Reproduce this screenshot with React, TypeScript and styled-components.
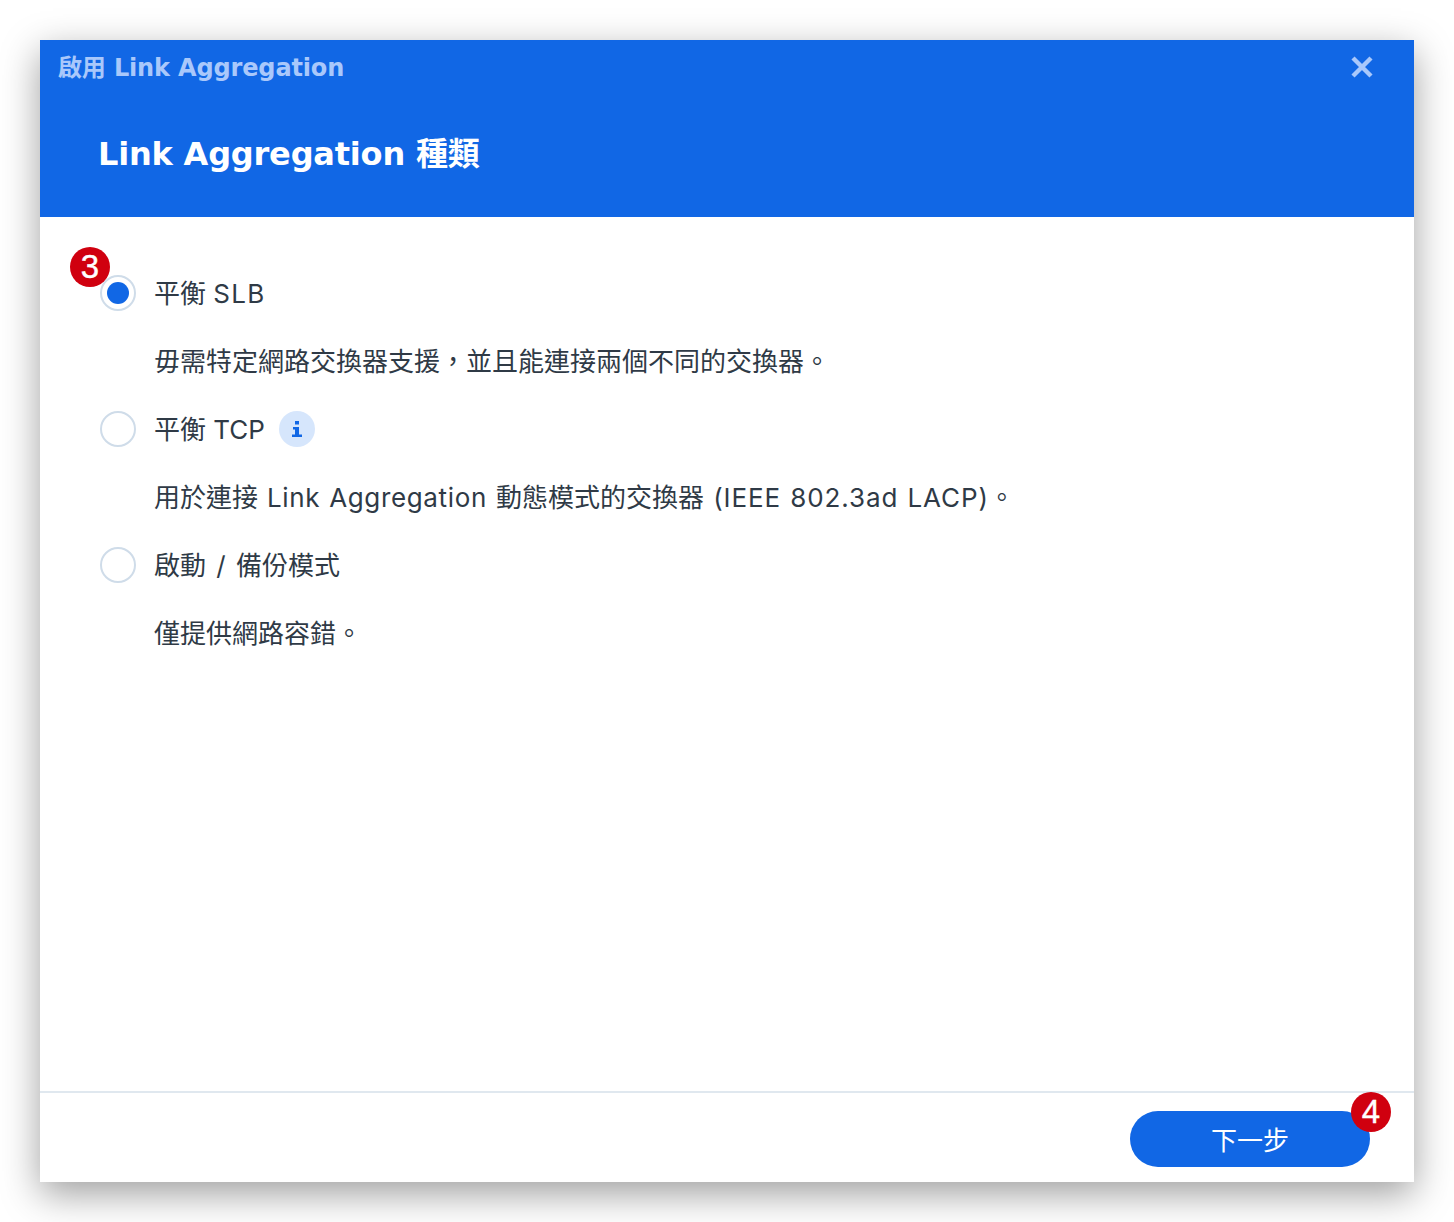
import React from 'react';
import styled, { createGlobalStyle } from 'styled-components';

const Global = createGlobalStyle`
  html, body { margin: 0; padding: 0; background: #fff; }
  body { font-family: Inter, "Noto Sans CJK TC", sans-serif; }
`;
const Page = styled.div`
  width: 1454px; height: 1222px; padding: 40px; box-sizing: border-box; overflow: hidden;
`;
const Dialog = styled.div`
  position: relative; width: 1374px; height: 1142px; background: #fff;
  display: flex; flex-direction: column;
  box-shadow: 0 12px 36px rgba(0,0,0,.38);
`;
const Header = styled.header`
  height: 177px; background: #1167e5; flex: none; box-sizing: border-box;
  display: flex; flex-direction: column; padding: 0 40px 0 18px;
`;
const TopBar = styled.div`
  height: 54px; display: flex; align-items: center; justify-content: space-between;
`;
const WindowTitle = styled.div`
  font-family: "DejaVu Sans", "Noto Sans CJK TC", sans-serif;
  font-size: 24px; font-weight: 700; color: #a9c8fb; line-height: 54px;
  letter-spacing: -0.15px; padding-top: 2px;
`;
const CloseButton = styled.button`
  border: 0; padding: 0; background: none; width: 24px; height: 24px; display: block; color: #a9c8fb;
`;
const StepTitle = styled.h1`
  font-family: "DejaVu Sans", "Noto Sans CJK TC", sans-serif;
  margin: 36px 0 0 40px; font-size: 32px; line-height: 48px; font-weight: 700; color: #fff;
  letter-spacing: -0.2px;
`;
const Body = styled.main`
  flex: 1; padding: 58px 60px 0; display: flex; flex-direction: column;
`;
const OptionRow = styled.label`
  height: 36px; display: flex; align-items: center; gap: 18px;
  font-size: 26px; color: #2f3a46;
`;
const Radio = styled.span<{ $checked?: boolean }>`
  width: 36px; height: 36px; box-sizing: border-box; border-radius: 50%; border: 2px solid #cfdce9; background: #fff;
  display: flex; align-items: center; justify-content: center; flex: none;
  &::after { content: ""; width: 22px; height: 22px; border-radius: 50%; background: ${p => (p.$checked ? '#1167e5' : 'transparent')}; }
`;
const Label = styled.span`
  line-height: 36px; display: flex; align-items: center; gap: 14px; white-space: pre;
`;
const LabelText = styled.span`
  position: relative; top: 1px;
`;
const InfoIcon = styled.span`
  width: 36px; height: 36px; border-radius: 50%; background: #d6e6fc; display: flex; align-items: center; justify-content: center;
`;
const Description = styled.p`
  margin: 0 0 31px 54px; height: 36px; padding-top: 33px; box-sizing: content-box;
  font-size: 26px; line-height: 36px; color: #2f3a46; white-space: nowrap;
`;
const Latin = styled.span<{ $ls: number; $ws?: number }>`
  letter-spacing: ${p => p.$ls}px;
  word-spacing: ${p => p.$ws ?? 1}px;
`;
const Footer = styled.footer`
  height: 91px; flex: none; border-top: 2px solid #e0e8ef; box-sizing: border-box;
  display: flex; justify-content: flex-end; align-items: flex-start; padding: 18px 44px 0 0;
`;
const NextButton = styled.button`
  width: 240px; height: 56px; border-radius: 28px; border: 0; background: #1167e5; color: #fff;
  font-family: inherit; font-size: 26px; line-height: 56px; padding: 2px 0 0;
`;
const Badge = styled.span<{ $x: number; $y: number }>`
  position: absolute; left: ${p => p.$x}px; top: ${p => p.$y}px; width: 40px; height: 40px; border-radius: 50%;
  background: #d0000f; color: #fff; font-family: "Liberation Sans", sans-serif; font-size: 33px; line-height: 40px; text-align: center;
  -webkit-text-stroke: 0.4px #fff;
`;

export default function App() {
  return (
    <Page>
      <Global />
      <Dialog>
        <Header>
          <TopBar>
            <WindowTitle>啟用 Link Aggregation</WindowTitle>
            <CloseButton aria-label="close">
              <svg width="24" height="24" viewBox="0 0 24 24"><path d="M3 3l18 18M21 3L3 21" stroke="currentColor" strokeWidth="4.4" fill="none" /></svg>
            </CloseButton>
          </TopBar>
          <StepTitle>Link Aggregation 種類</StepTitle>
        </Header>
        <Body>
          <OptionRow>
            <Radio $checked />
            <Label><LabelText>平衡 <Latin $ls={1.3}>SLB</Latin></LabelText></Label>
          </OptionRow>
          <Description>毋需特定網路交換器支援，並且能連接兩個不同的交換器。</Description>
          <OptionRow>
            <Radio />
            <Label>
              <LabelText>平衡 TCP</LabelText>
              <InfoIcon>
                <svg width="10" height="16" viewBox="0 0 10 16"><path d="M3 0h4v3.4H3zM1 6h6v7.4h3V16H0v-2.6h3V8.4H1z" fill="#1167e5" /></svg>
              </InfoIcon>
            </Label>
          </OptionRow>
          <Description>
            用於連接<Latin $ls={0.65}> Link Aggregation </Latin>動態模式的交換器<Latin $ls={0.9}> (IEEE 802.3ad LACP)</Latin>。
          </Description>
          <OptionRow>
            <Radio />
            <Label><LabelText>啟動<Latin $ls={0} $ws={3}> / </Latin>備份模式</LabelText></Label>
          </OptionRow>
          <Description>僅提供網路容錯。</Description>
        </Body>
        <Footer>
          <NextButton>下一步</NextButton>
        </Footer>
        <Badge $x={30} $y={207}>3</Badge>
        <Badge $x={1311} $y={1052}>4</Badge>
      </Dialog>
    </Page>
  );
}
